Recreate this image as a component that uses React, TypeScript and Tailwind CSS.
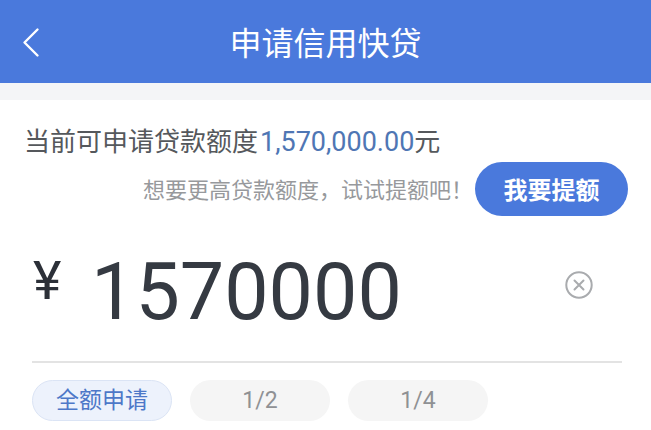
const cjk = "font-['Roboto','Noto_Sans_CJK_SC',sans-serif]"

function BackIcon() {
  return (
    <svg width="18" height="32" viewBox="0 0 18 32" fill="none" stroke="#ffffff" strokeWidth="2.4" strokeLinecap="round" strokeLinejoin="round">
      <path d="M15.5 2.5 L2.5 15.5 L15.5 28.5" />
    </svg>
  )
}

function ClearIcon() {
  return (
    <svg width="28" height="28" viewBox="0 0 28 28" fill="none" stroke="#a9abae" strokeWidth="2" strokeLinecap="round">
      <circle cx="14" cy="14" r="12.7" />
      <path d="M9.5 9.5 L18.5 18.5 M18.5 9.5 L9.5 18.5" />
    </svg>
  )
}

export default function App() {
  return (
    <div className={`${cjk} h-[430px] w-[651px] overflow-hidden bg-white`}>
      {/* Header */}
      <header className="relative flex h-[83px] items-center justify-center bg-[#4a79dc]">
        <div className="absolute left-[22px] top-[27px] flex">
          <BackIcon />
        </div>
        <h1 className="pt-[4px] text-[32px] leading-none font-normal text-white">申请信用快贷</h1>
      </header>
      <div className="h-[17px] bg-[#f4f5f7]" />

      {/* Limit */}
      <div className="px-[24px] pt-[26px]">
        <p className="text-[26px] leading-[32px] text-[#55585c]">
          当前可申请贷款额度<span className="ml-[2px] text-[27px] text-[#4f76b4]">1,570,000.00</span>元
        </p>
      </div>
      <div className="flex items-center justify-end gap-[2px] pr-[23px] pt-[4px]">
        <span className="pt-[3px] text-[22px] leading-none text-[#97999c]">想要更高贷款额度，试试提额吧！</span>
        <button className="flex h-[54px] w-[153px] items-center justify-center rounded-full bg-[#4a79dc] pt-[3px] text-[24px] font-bold text-white">
          我要提额
        </button>
      </div>

      {/* Amount */}
      <div className="mr-[29px] ml-[32px] mt-[25px] flex h-[122px] items-start border-b-2 border-[#e3e3e3]">
        <span className="mt-[12px] ml-[1px] w-[58px] text-[54px] leading-[56px] font-normal text-[#2c3038]">¥</span>
        <span className="pt-[4px] text-[79px] leading-[94px] text-[#353a42]">1570000</span>
        <span className="mt-[30px] ml-auto mr-[29px] flex">
          <ClearIcon />
        </span>
      </div>

      {/* Quick options */}
      <div className="mx-[32px] mt-[17px] flex gap-[18px]">
        <button className="flex h-[41px] w-[140px] items-center justify-center rounded-full border border-[#dbe4f5] bg-[#edf2fc] pt-[1px] text-[23px] text-[#4d78c8]">
          全额申请
        </button>
        <button className="flex h-[41px] w-[140px] items-center justify-center rounded-full bg-[#f5f5f5] pt-[1px] text-[23px] text-[#8f9194]">
          1/2
        </button>
        <button className="flex h-[41px] w-[140px] items-center justify-center rounded-full bg-[#f5f5f5] pt-[1px] text-[23px] text-[#8f9194]">
          1/4
        </button>
      </div>
    </div>
  )
}
